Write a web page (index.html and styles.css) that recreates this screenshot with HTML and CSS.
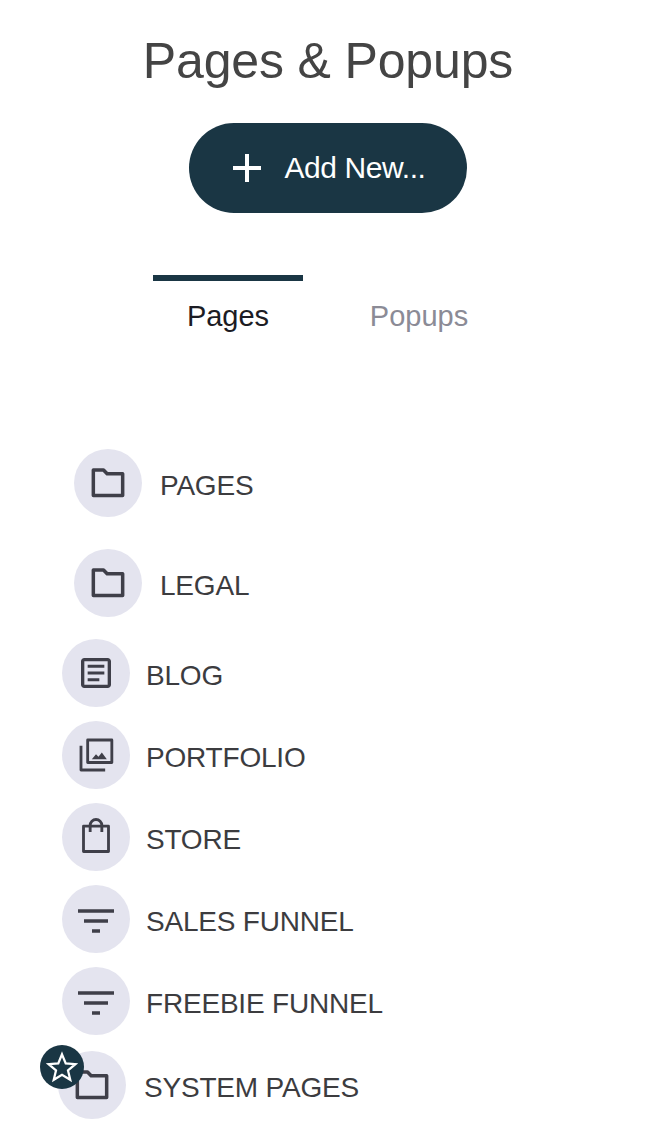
FILE: index.html
```html
<!DOCTYPE html>
<html lang="en">
<head>
<meta charset="utf-8">
<title>Pages &amp; Popups</title>
<link rel="stylesheet" href="styles.css">
</head>
<body>
<main class="page">
  <h1 class="title">Pages &amp; Popups</h1>
  <button class="add-btn" type="button">
    <svg class="plus" viewBox="0 0 30 30" aria-hidden="true"><path d="M15 1v28M1 15h28"/></svg>
    <span>Add New...</span>
  </button>
  <nav class="tabs">
    <a class="tab tab-active">Pages</a>
    <a class="tab">Popups</a>
  </nav>
  <ul class="list">
    <li class="row row-folder">
      <span class="circle"><svg class="icon line" viewBox="0 0 24 24"><path d="M3.200 4.200h6.100l2.200 2.300h9.300v13H3.200z"/></svg></span>
      <span class="label">PAGES</span>
    </li>
    <li class="row row-folder row-legal">
      <span class="circle"><svg class="icon line" viewBox="0 0 24 24"><path d="M3.200 4.200h6.100l2.200 2.300h9.300v13H3.200z"/></svg></span>
      <span class="label">LEGAL</span>
    </li>
    <li class="row row-blog">
      <span class="circle"><svg class="icon" viewBox="0 0 24 24"><path d="M19 4.900v14.200H5V4.900h14M19 3H5C3.900 3 3 3.900 3 5v14c0 1.100.9 2 2 2h14c1.100 0 2-.9 2-2V5c0-1.100-.9-2-2-2z"/><path d="M14 16.900H7v-1.800h7v1.800zm3-4H7v-1.800h10v1.800zm0-4H7V7.100h10v1.800z"/></svg></span>
      <span class="label">BLOG</span>
    </li>
    <li class="row">
      <span class="circle"><svg class="icon line thin" viewBox="0 0 24 24"><path d="M7 3h14.500v13.500H7z"/><path d="M3 6.500V21h14.500"/><path class="solid" d="M9.500 14.500l2.500-3 1.500 1.500 2-2.500 3 4z"/></svg></span>
      <span class="label">PORTFOLIO</span>
    </li>
    <li class="row">
      <span class="circle"><svg class="icon line thin" viewBox="0 0 24 24"><path d="M4.500 5.500h15v15.200h-15z"/><path d="M8.500 9V5a3.500 3.500 0 0 1 7 0v4"/></svg></span>
      <span class="label">STORE</span>
    </li>
    <li class="row">
      <span class="circle"><svg class="icon" viewBox="0 0 24 24"><path d="M1.200 6.100h21.600v2.200H1.200zM4.800 12.100h14.400v2.200H4.800zM9.600 18.100h4.800v2.200H9.600z"/></svg></span>
      <span class="label">SALES FUNNEL</span>
    </li>
    <li class="row">
      <span class="circle"><svg class="icon" viewBox="0 0 24 24"><path d="M1.200 6.100h21.600v2.200H1.200zM4.800 12.100h14.400v2.200H4.800zM9.600 18.100h4.800v2.200H9.600z"/></svg></span>
      <span class="label">FREEBIE FUNNEL</span>
    </li>
    <li class="row row-system">
      <span class="circle"><svg class="icon line" viewBox="0 0 24 24"><path d="M3.200 4.200h6.100l2.200 2.300h9.300v13H3.200z"/></svg></span>
      <span class="label">SYSTEM PAGES</span>
      <span class="badge"><svg viewBox="0 0 24 24"><path d="M12 2.500l2.800 6.800 7.200.6-5.500 4.700 1.700 7-6.200-3.800-6.200 3.800 1.700-7L2 9.900l7.200-.6z"/></svg></span>
    </li>
  </ul>
</main>
</body>
</html>
```
FILE: styles.css
```css
* { box-sizing: border-box; }
html, body { margin: 0; padding: 0; background: #fff; }
body { font-family: "Liberation Sans", Arial, sans-serif; }
.page { width: 666px; height: 1148px; overflow: hidden; padding: 33px 10px 0 0; display: flex; flex-direction: column; align-items: center; }
.title { margin: 0; font-size: 50px; line-height: 56px; font-weight: 400; letter-spacing: -0.15px; color: #444; text-align: center; white-space: nowrap; }
.add-btn { margin-top: 34px; width: 278px; height: 90px; border: 0; border-radius: 45px; background: #1a3644; color: #fff; display: flex; align-items: center; justify-content: center; gap: 22px; padding: 0 0 0 2px; font: 400 30px "Liberation Sans", Arial, sans-serif; letter-spacing: -0.4px; }
.plus { width: 30px; height: 30px; }
.plus path { fill: none; stroke: #fff; stroke-width: 4; }
.tabs { margin: 62px 0 0 153px; display: flex; align-self: flex-start; }
.tab { width: 150px; height: 60px; padding-top: 21px; text-align: center; font-size: 29px; line-height: 40px; color: #8b8b96; }
.tab + .tab { margin-left: 66px; width: 100px; }
.tab-active { border-top: 6px solid #1a3644; padding-top: 15px; color: #1c1c24; }
.list { list-style: none; margin: 114px 0 0; padding: 0; align-self: stretch; display: flex; flex-direction: column; }
.row { position: relative; display: flex; align-items: center; gap: 16px; height: 68px; padding-left: 62px; margin-bottom: 14px; }
.row-folder { padding-left: 74px; gap: 18px; margin-bottom: 32px; }
.row-legal { margin-bottom: 22px; }
.row-system { padding-left: 58px; gap: 18px; margin-top: 2px; }
.circle { flex: none; width: 68px; height: 68px; border-radius: 50%; background: #e4e4ef; display: flex; align-items: center; justify-content: center; }
.icon { width: 40px; height: 40px; fill: #3f3f49; }
.line { fill: none; stroke: #3f3f49; stroke-width: 2.1; stroke-linejoin: round; }
.thin { stroke-width: 1.7; }
.solid { fill: #3f3f49; stroke: none; }
.label { font-size: 28px; line-height: 36px; letter-spacing: -0.2px; color: #3c3c3f; margin-top: 5px; }
.badge { position: absolute; left: 40px; top: -6px; width: 44px; height: 44px; border-radius: 50%; background: #1a3644; display: flex; align-items: center; justify-content: center; }
.badge svg { width: 32px; height: 32px; fill: none; stroke: #fff; stroke-width: 1.7; stroke-linejoin: miter; }
```
